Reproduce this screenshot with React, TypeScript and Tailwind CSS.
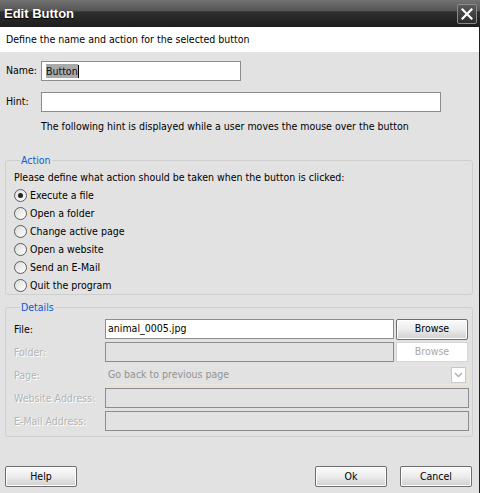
import React from "react";

const font = "font-['DejaVu_Sans_Condensed','DejaVu_Sans',sans-serif]";

function Radio({ checked, label }: { checked?: boolean; label: string }) {
  return (
    <div className="flex h-[18px] items-center">
      <span className="flex h-[13px] w-[13px] items-center justify-center rounded-full border border-[#5a5a5a] bg-gradient-to-br from-[#dcdcdc] to-white">
        {checked && <span className="h-[5px] w-[5px] rounded-full bg-[#222]" />}
      </span>
      <span className="ml-[3px] text-[10.5px] leading-[14px] text-black">{label}</span>
    </div>
  );
}

function Btn({ label, disabled }: { label: string; disabled?: boolean }) {
  if (disabled) {
    return (
      <div className="flex h-[20px] w-[72px] items-center justify-center border border-[#d6d6d6] bg-white text-[10.5px] text-[#a8a8a8]">
        {label}
      </div>
    );
  }
  return (
    <div className="flex h-[21px] w-[72px] items-center justify-center rounded-[2px] border border-[#6e6e6e] bg-gradient-to-b from-[#fbfbfb] via-[#ececec] to-[#cfcfcf] text-[10.5px] text-black shadow-[inset_0_0_0_1px_#ffffff]">
      {label}
    </div>
  );
}

function DetailRow({
  label,
  disabled,
  children,
}: {
  label: string;
  disabled?: boolean;
  children: React.ReactNode;
}) {
  return (
    <div className="flex h-[20px] items-center">
      <span
        className={
          "w-[91px] text-[10.5px] leading-[14px] " +
          (disabled ? "text-[#b4b4b4] [text-shadow:1px_1px_0_#ffffff]" : "text-black")
        }
      >
        {label}
      </span>
      {children}
    </div>
  );
}

export default function App() {
  return (
    <div className={`${font} flex h-[493px] w-[480px] flex-col overflow-hidden bg-[#e2e2e2]`}>
      {/* Title bar */}
      <div className="flex h-[27px] shrink-0 items-center justify-between bg-[linear-gradient(to_bottom,#727272_0%,#555555_40%,#2e2e2e_44%,#1e1e1e_100%)] pl-[4px] pr-[3px]">
        <span className="font-['Liberation_Sans',Arial,sans-serif] text-[13px] font-bold text-white [text-shadow:0_1px_1px_#000]">
          Edit Button
        </span>
        <div className="flex h-[20px] w-[20px] items-center justify-center rounded-[2px] border border-[#8a8a8a] bg-gradient-to-b from-[#5a5a5a] to-[#2c2c2c]">
          <svg width="12" height="12" viewBox="0 0 12 12">
            <path d="M1.5 1.5 L10.5 10.5 M10.5 1.5 L1.5 10.5" stroke="#fff" strokeWidth="2.2" strokeLinecap="square" />
          </svg>
        </div>
      </div>

      <div className="flex flex-1 flex-col border-r border-[#1e1e1e]">
        {/* Header band */}
        <div className="flex h-[25px] shrink-0 items-center bg-white pl-[6px] text-[10.5px] text-black">
          Define the name and action for the selected button
        </div>

        {/* Body */}
        <div className="flex flex-1 flex-col pt-[9px]">
          <div className="flex h-[20px] items-center pl-[6px]">
            <span className="w-[35px] text-[10.5px] text-black">Name:</span>
            <div className="flex h-[20px] w-[200px] items-center border border-[#8c8c8c] bg-white pl-[4px]">
              <span className="bg-[#a9a9a9] text-[10.5px] leading-[14px] text-[#111]">Button</span>
              <span className="h-[13px] w-[1px] bg-black" />
            </div>
          </div>

          <div className="mt-[11px] flex h-[20px] items-center pl-[6px]">
            <span className="w-[35px] text-[10.5px] text-black">Hint:</span>
            <div className="h-[20px] w-[400px] border border-[#8c8c8c] bg-white" />
          </div>

          <div className="mt-[7px] h-[14px] pl-[41px] text-[10.5px] leading-[14px] text-black">
            The following hint is displayed while a user moves the mouse over the button
          </div>

          {/* Action group */}
          <fieldset className="mx-[5px] mt-[20px] w-[468px] rounded-[3px] border border-[#cfcfcf] pl-[8px]">
            <legend className="ml-[6px] px-[1px] text-[10.5px] leading-[14px] text-[#0a5ad8]">Action</legend>
            <div className="mt-[3px] h-[16px] text-[10.5px] leading-[14px] text-black">
              Please define what action should be taken when the button is clicked:
            </div>
            <Radio checked label="Execute a file" />
            <Radio label="Open a folder" />
            <Radio label="Change active page" />
            <Radio label="Open a website" />
            <Radio label="Send an E-Mail" />
            <Radio label="Quit the program" />
          </fieldset>

          {/* Details group */}
          <fieldset className="mx-[5px] mt-[5px] w-[468px] rounded-[3px] border border-[#cfcfcf] pb-[5px] pl-[8px]">
            <legend className="ml-[6px] px-[1px] text-[10.5px] leading-[14px] text-[#0a5ad8]">Details</legend>
            <div className="mt-[5px] flex flex-col gap-[3px]">
              <DetailRow label="File:">
                <div className="flex h-[20px] w-[289px] items-center border border-[#8c8c8c] bg-white pl-[2px] text-[10.5px] text-black">
                  animal_0005.jpg
                </div>
                <div className="ml-[2px]">
                  <Btn label="Browse" />
                </div>
              </DetailRow>
              <DetailRow label="Folder:" disabled>
                <div className="h-[20px] w-[289px] border border-[#8c8c8c] bg-[#e2e2e2]" />
                <div className="ml-[2px]">
                  <Btn label="Browse" disabled />
                </div>
              </DetailRow>
              <DetailRow label="Page:" disabled>
                <div className="flex h-[20px] w-[364px] items-center justify-between border border-[#ebe6d6] bg-[#e2e2e2] pl-[2px] pr-[2px]">
                  <span className="text-[10.5px] text-[#929292]">Go back to previous page</span>
                  <div className="flex h-[16px] w-[15px] items-center justify-center border border-[#c8c8c8] bg-white">
                    <svg width="9" height="6" viewBox="0 0 9 6">
                      <path d="M1 1 L4.5 4.5 L8 1" stroke="#b0b0b0" strokeWidth="1.5" fill="none" />
                    </svg>
                  </div>
                </div>
              </DetailRow>
              <DetailRow label="Website Address:" disabled>
                <div className="h-[20px] w-[364px] border border-[#8c8c8c] bg-[#e2e2e2]" />
              </DetailRow>
              <DetailRow label="E-Mail Address:" disabled>
                <div className="h-[20px] w-[364px] border border-[#8c8c8c] bg-[#e2e2e2]" />
              </DetailRow>
            </div>
          </fieldset>

          {/* Footer */}
          <div className="mt-auto flex items-center justify-between pb-[6px] pl-[5px] pr-[7px]">
            <Btn label="Help" />
            <div className="flex gap-[13px]">
              <Btn label="Ok" />
              <Btn label="Cancel" />
            </div>
          </div>
        </div>
      </div>
    </div>
  );
}
